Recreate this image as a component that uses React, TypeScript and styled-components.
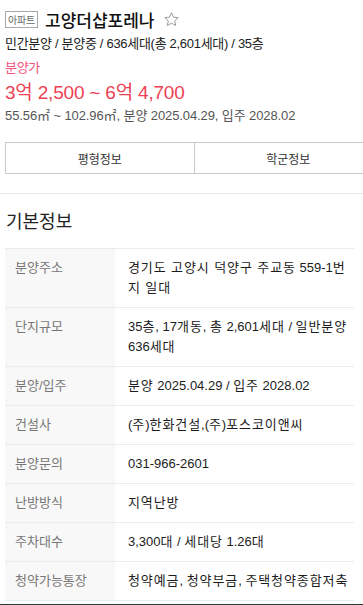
import React from 'react';
import styled, { createGlobalStyle } from 'styled-components';

const GlobalStyle = createGlobalStyle`
  html, body {
    margin: 0;
    padding: 0;
    background: #fff;
  }
  body {
    font-family: "Liberation Sans", "Noto Sans CJK KR", sans-serif;
    color: #222;
    overflow: hidden;
  }
`;

const Page = styled.div`
  width: 363px;
  height: 605px;
  display: flex;
  flex-direction: column;
  overflow: hidden;
`;

const Header = styled.section`
  padding: 7px 0 0 5px;
`;

const TitleRow = styled.div`
  display: flex;
  align-items: center;
  height: 24px;
`;

const TypeBadge = styled.span`
  display: inline-flex;
  align-items: center;
  height: 15px;
  padding: 0 2px;
  border: 1px solid #a8a8a8;
  font-size: 10px;
  color: #666;
  letter-spacing: -0.2px;
`;

const Title = styled.h1`
  margin: 0 0 0 7px;
  font-size: 17px;
  font-weight: 500;
  color: #111;
`;

const StarButton = styled.span`
  margin-left: 9px;
  display: inline-flex;
  color: #9a9a9a;
`;

const Summary = styled.div<{ $tone?: 'pink' | 'gray' }>`
  font-size: 13px;
  line-height: 20px;
  letter-spacing: ${({ $tone }) => ($tone === 'gray' ? '-0.1px' : '-0.3px')};
  color: ${({ $tone }) => ($tone === 'pink' ? '#f2547a' : $tone === 'gray' ? '#555' : '#222')};
`;

const Price = styled.div`
  font-size: 19px;
  line-height: 26px;
  margin-top: 2px;
  color: #ee3f55;
  letter-spacing: -0.2px;
`;

const Tabs = styled.div`
  display: flex;
  margin: 16px -20px 0 5px;
  border: 1px solid #c9c9c9;
`;

const Tab = styled.div`
  flex: 1;
  height: 30px;
  display: flex;
  align-items: center;
  justify-content: center;
  font-size: 12px;
  color: #333;
  & + & {
    border-left: 1px solid #c9c9c9;
  }
`;

const Divider = styled.hr`
  margin: 19px 0 0;
  border: 0;
  border-top: 1px solid #e6e6e6;
`;

const SectionTitle = styled.h2`
  margin: 16px 0 0 6px;
  font-size: 18px;
  font-weight: 400;
  line-height: 24px;
  color: #222;
`;

const InfoTable = styled.div`
  margin: 14px 9px 0 5px;
  border-top: 1px solid #ececec;
`;

const InfoRow = styled.div`
  display: grid;
  grid-template-columns: 110px 1fr;
  border-bottom: 1px solid #ececec;
`;

const Label = styled.div`
  background: #f8f8f8;
  padding: 9px 0 9px 10px;
  font-size: 13px;
  line-height: 20px;
  color: #777;
`;

const Value = styled.div`
  padding: 9px 2px 9px 13px;
  font-size: 13px;
  line-height: 20px;
  color: #1c1c1c;
  word-break: break-all;
`;

const Hangul = styled.span`
  letter-spacing: 0.9px;
`;

const BottomEdge = styled.div`
  margin-top: auto;
  height: 1px;
  background: #2f3a34;
`;

const rows: [string, string][] = [
  ['분양주소', '경기도 고양시 덕양구 주교동 559-1번지 일대'],
  ['단지규모', '35층, 17개동, 총 2,601세대 / 일반분양 636세대'],
  ['분양/입주', '분양 2025.04.29 / 입주 2028.02'],
  ['건설사', '(주)한화건설,(주)포스코이앤씨'],
  ['분양문의', '031-966-2601'],
  ['난방방식', '지역난방'],
  ['주차대수', '3,300대 / 세대당 1.26대'],
  ['청약가능통장', '청약예금, 청약부금, 주택청약종합저축'],
];

// hangul in the value column sits a little looser than latin
const spaced = (text: string) =>
  text
    .split(/([가-힣]+(?: [가-힣]+)*)/)
    .map((part, i) => (i % 2 ? <Hangul key={i}>{part}</Hangul> : part));

const StarIcon = () => (
  <svg width="17" height="17" viewBox="0 0 24 24" fill="none" stroke="currentColor" strokeWidth="1.4" strokeLinejoin="round">
    <path d="M12 2.5l2.9 6.2 6.6.7-5 4.5 1.4 6.6L12 17.2l-5.9 3.3 1.4-6.6-5-4.5 6.6-.7z" />
  </svg>
);

export default function App() {
  return (
    <Page>
      <GlobalStyle />
      <Header>
        <TitleRow>
          <TypeBadge>아파트</TypeBadge>
          <Title>고양더샵포레나</Title>
          <StarButton>
            <StarIcon />
          </StarButton>
        </TitleRow>
        <Summary style={{ marginTop: 3 }}>민간분양 / 분양중 / 636세대(총 2,601세대) / 35층</Summary>
        <Summary $tone="pink" style={{ marginTop: 4 }}>분양가</Summary>
        <Price>3억 2,500 ~ 6억 4,700</Price>
        <Summary $tone="gray">55.56㎡ ~ 102.96㎡, 분양 2025.04.29, 입주 2028.02</Summary>
      </Header>
      <Tabs>
        <Tab>평형정보</Tab>
        <Tab>학군정보</Tab>
      </Tabs>
      <Divider />
      <SectionTitle>기본정보</SectionTitle>
      <InfoTable>
        {rows.map(([label, value]) => (
          <InfoRow key={label}>
            <Label>{label}</Label>
            <Value>{spaced(value)}</Value>
          </InfoRow>
        ))}
      </InfoTable>
      <BottomEdge />
    </Page>
  );
}
